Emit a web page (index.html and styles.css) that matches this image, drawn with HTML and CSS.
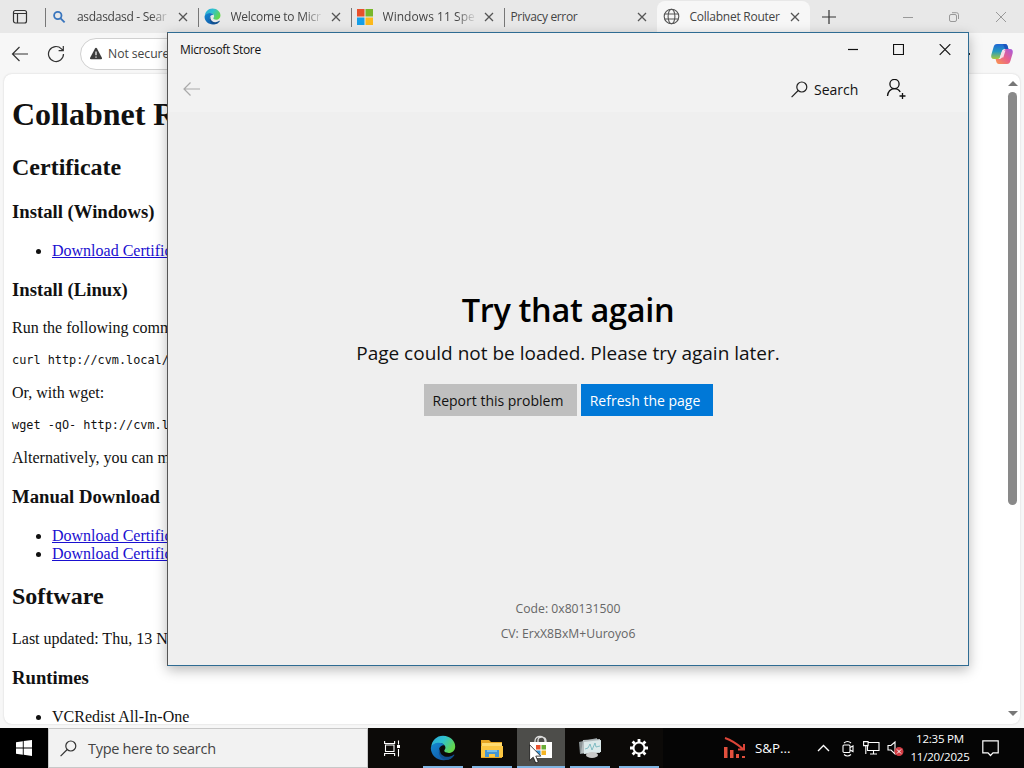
FILE: index.html
```html
<!DOCTYPE html>
<html lang="en">
<head>
<meta charset="utf-8">
<title>Desktop</title>
<link rel="stylesheet" href="styles.css">
</head>
<body>
<div class="desktop">
  <main class="browser">
    <div class="tabs">
      <svg class="workspaces" width="16" height="16" viewBox="0 0 16 16" fill="none" stroke="#333" stroke-width="1.2"><rect x="1.5" y="1.5" width="13" height="12.5" rx="2"/><path d="M2 4.5h12M5.5 5v9" /></svg>
      <div class="tab t1">
        <svg width="16" height="16" viewBox="0 0 16 16" fill="none" stroke="#3975bd" stroke-width="1.8"><circle cx="6.8" cy="6.5" r="3.7"/><path d="M9.6 9.3l4 4"/></svg>
        <span class="tab-title fade">asdasdasd - Sear</span>
        <svg class="x" width="10" height="10" viewBox="0 0 10 10"><path d="M1 1l8 8M9 1l-8 8"/></svg>
      </div>
      <div class="tab t2">
        <svg width="17" height="17" viewBox="0 0 32 32"><use href="#edge"/></svg>
        <span class="tab-title fade">Welcome to Micr</span>
        <svg class="x" width="10" height="10" viewBox="0 0 10 10"><path d="M1 1l8 8M9 1l-8 8"/></svg>
      </div>
      <div class="tab t3">
        <svg width="16" height="16" viewBox="0 0 16 16"><path fill="#e8502a" d="M0 0h7.5v7.5H0z"/><path fill="#78b72a" d="M8.5 0H16v7.5H8.5z"/><path fill="#159fe8" d="M0 8.5h7.5V16H0z"/><path fill="#fcb91b" d="M8.5 8.5H16V16H8.5z"/></svg>
        <span class="tab-title fade">Windows 11 Spe</span>
        <svg class="x" width="10" height="10" viewBox="0 0 10 10"><path d="M1 1l8 8M9 1l-8 8"/></svg>
      </div>
      <div class="tab t4">
        <span class="tab-title">Privacy error</span>
        <svg class="x" width="10" height="10" viewBox="0 0 10 10"><path d="M1 1l8 8M9 1l-8 8"/></svg>
      </div>
      <div class="tab t5">
        <svg width="17" height="17" viewBox="0 0 17 17" fill="none" stroke="#555" stroke-width="1.1"><circle cx="8.5" cy="8.5" r="7.3"/><ellipse cx="8.5" cy="8.5" rx="3.4" ry="7.3"/><path d="M1.8 6h13.4M1.8 11h13.4"/></svg>
        <span class="tab-title">Collabnet Router</span>
        <svg class="x" width="10" height="10" viewBox="0 0 10 10"><path d="M1 1l8 8M9 1l-8 8"/></svg>
      </div>
      <svg class="plus" width="14" height="14" viewBox="0 0 14 14" stroke="#333" stroke-width="1.2"><path d="M7 0v14M0 7h14"/></svg>
      <div class="win-controls">
        <svg width="10" height="10" viewBox="0 0 10 10"><path d="M0 5.5h10"/></svg>
        <svg width="10" height="10" viewBox="0 0 10 10"><rect x=".5" y="2.5" width="7" height="7" rx="1.5"/><path d="M3 .7h4.5a2 2 0 0 1 2 2V7"/></svg>
        <svg width="12" height="12" viewBox="0 0 12 12"><path d="M1 1l10 10M11 1L1 11"/></svg>
      </div>
    </div>
    <div class="toolbar">
      <svg width="18" height="16" viewBox="0 0 18 16" fill="none" stroke="#333" stroke-width="1.2"><path d="M17 8H1.5M8.5 1L1.5 8l7 7"/></svg>
      <svg width="18" height="18" viewBox="0 0 18 18" fill="none" stroke="#333" stroke-width="1.2"><path d="M16.5 9A7.5 7.5 0 1 1 14.4 3.8L16 5.4M16.3 1v4.6h-4.7"/></svg>
      <div class="address">
        <svg width="14" height="13" viewBox="0 0 14 13"><path fill="#3c3c3c" d="M7 .8q.6 0 1 .7l5 9.600q.4 1-.8 1.200H1.800Q.6 12.100 1 11.100L6 1.500Q6.400.8 7 .8z"/><path stroke="#fff" stroke-width="1.200" d="M7 4.500v3.800M7 9.500v1.200"/></svg>
        <span>Not secure</span>
      </div>
      <i class="dot"></i>
      <svg class="copilot" width="24" height="24" viewBox="0 0 24 24">
        <defs>
          <linearGradient id="cpa" x1="0" y1="0" x2="0" y2="1"><stop offset="0" stop-color="#1f66d4"/><stop offset=".5" stop-color="#269ac0"/><stop offset="1" stop-color="#a9c93c"/></linearGradient>
          <linearGradient id="cpb" x1="1" y1="0" x2="0" y2="1"><stop offset="0" stop-color="#a55ae0"/><stop offset=".5" stop-color="#e8608c"/><stop offset="1" stop-color="#fb9a4c"/></linearGradient>
        </defs>
        <path fill="url(#cpa)" d="M7 2h8c2 0 2.500 1.500 3 3.500l.4 1.500H15c-2 0-2.800 1-3.400 3l-1.300 4.500c-.6 2-1.600 2.500-3.300 2.500H4C1.500 17 .7 15 1.400 12.500L3.600 5C4.200 3 5 2 7 2z"/>
        <path fill="url(#cpb)" d="M17 22H9c-2 0-2.500-1.500-3-3.500L5.600 17H9c2 0 2.800-1 3.400-3l1.300-4.500C14.300 7.500 15.300 7 17 7h3c2.500 0 3.300 2 2.600 4.500L20.400 19c-.6 2-1.400 3-3.400 3z"/>
        <path fill="#1d55bd" d="M13 2h2c2 0 2.500 1.500 3 3.500l.4 1.500H15z"/>
        <path fill="#f6dce8" d="M12.500 8.500h3l-2.200 7h-3.500z"/>
      </svg>
    </div>
    <div class="view">
      <div class="page">
        <h1>Collabnet Router</h1>
        <h2>Certificate</h2>
        <h3>Install (Windows)</h3>
        <ul><li><a>Download Certificate</a></li></ul>
        <h3>Install (Linux)</h3>
        <p>Run the following command:</p>
        <pre>curl http://cvm.local/</pre>
        <p>Or, with wget:</p>
        <pre>wget -qO- http://cvm.local/</pre>
        <p>Alternatively, you can manually</p>
        <h3>Manual Download</h3>
        <ul><li><a>Download Certificate</a></li><li><a>Download Certificate</a></li></ul>
        <h2>Software</h2>
        <p>Last updated: Thu, 13 Nov</p>
        <h3>Runtimes</h3>
        <ul><li>VCRedist All-In-One</li></ul>
      </div>
      <div class="scrollbar"><i class="up"></i><i class="thumb"></i><i class="down"></i></div>
    </div>
  </main>

  <section class="store">
    <header class="store-title">
      <span>Microsoft Store</span>
      <div class="store-controls">
        <svg width="10" height="12" viewBox="0 0 10 12"><path d="M0 5.500h10"/></svg>
        <svg width="11" height="12" viewBox="0 0 11 12"><path d="M.5.500h10v10H.5z"/></svg>
        <svg width="12" height="12" viewBox="0 0 12 12"><path d="M.7.2l10.600 10.600M11.300.2L.7 10.800"/></svg>
      </div>
    </header>
    <div class="store-nav">
      <svg class="back" width="17" height="14" viewBox="0 0 17 14" fill="none" stroke="#aaa" stroke-width="1.200"><path d="M17 7H1M7.500.5L1 7l6.500 6.500"/></svg>
      <svg width="17" height="17" viewBox="0 0 17 17" fill="none" stroke="#222" stroke-width="1.200"><circle cx="10.800" cy="6" r="5"/><path d="M7.200 9.500L.6 16.200"/></svg>
      <span class="store-search">Search</span>
      <svg class="person" width="21" height="21" viewBox="0 0 21 21" fill="none" stroke="#111" stroke-width="1.300"><circle cx="8.500" cy="5" r="4.600"/><path d="M1.500 17c.2-4 3-7.400 7-7.400 2.600 0 4.600 1.300 5.700 3.400M16.500 14v6M13.500 17h6"/></svg>
    </div>
    <div class="message">
      <div class="headline">Try that again</div>
      <div class="detail">Page could not be loaded. Please try again later.</div>
      <div class="actions"><span class="btn report">Report this problem</span><span class="btn refresh">Refresh the page</span></div>
    </div>
    <div class="codes"><span class="code">Code: 0x80131500</span><span class="cv">CV: ErxX8BxM+Uuroyo6</span></div>
  </section>

  <footer class="taskbar">
    <div class="start"><svg width="16" height="16" viewBox="0 0 16 16" fill="#fff"><path d="M0 2.300L6.800 1.300v6.200H0zM7.700 1.100L16 0v7.500H7.700zM0 8.400h6.800v6.300L0 13.700zM7.700 8.400H16V16l-8.300-1.200z"/></svg></div>
    <div class="search">
      <svg width="17" height="17" viewBox="0 0 17 17" fill="none" stroke="#333" stroke-width="1.200"><circle cx="10.800" cy="6" r="5"/><path d="M7.200 9.500L.6 16.200"/></svg>
      <span>Type here to search</span>
    </div>
    <div class="taskview"><svg width="17" height="17" viewBox="0 0 17 17" fill="none" stroke="#fff" stroke-width="1.100"><path d="M.6 1v2.500h10V1M1.500 5h8.500v6.500H1.500zM.6 16v-2.500h10V16M14.500.5v4M14.500 9v7.500"/><path fill="#fff" stroke="none" d="M13 5h3v3h-3z"/></svg></div>
    <div class="apps">
      <div class="app"><svg width="26" height="26" viewBox="0 0 32 32">
        <defs>
          <linearGradient id="eg" x1="0" y1="0" x2="1" y2=".5"><stop offset="0" stop-color="#2aa6d8"/><stop offset=".5" stop-color="#2fc2d0"/><stop offset="1" stop-color="#63d64c"/></linearGradient>
          <linearGradient id="eb" x1="0" y1="0" x2="1" y2="1"><stop offset="0" stop-color="#1389d3"/><stop offset="1" stop-color="#124e9d"/></linearGradient>
        </defs>
        <g id="edge"><path fill="url(#eg)" d="M1.500 15C2 7 8 1 16 1c9 0 15 6.500 15 13 0 5-3.500 8-8 8-3.500 0-5.500-1.200-5.500-2.500 0-1 1.500-1.500 1.500-4C19 12.500 16 10 12 10 7 10 3 12 1.500 15z"/><path fill="url(#eb)" d="M1 16c1-4 5-6.500 10-6.500 3.500 0 6 1.500 7 3.500-2-1-7 1-7 6 0 6 5 10 11 10 2.500 0 4-.7 5.500-1.500C24.500 30 20.500 31 17 31 8 31 1 24.500 1 16z"/><path fill="#12508f" d="M14 14c-3 3-2 8 1 10.500 4 3.300 9.500 2.800 14-.3.700-.4 1.200.3.800.9C27 29 24 30.500 20 30.500 12 30 7.500 20 14 14z"/></g>
      </svg></div>
      <div class="app"><svg width="24" height="21" viewBox="0 0 24 21"><path fill="#e7a624" d="M1 2h8l2 2h11v16H1z"/><path fill="#ffdb70" d="M2 5h20v14H2z"/><path fill="#fbc642" d="M1 8h22v11H1z"/><path fill="#4595d2" d="M5 19v-7h14v7h-4v-3H9v3z"/><path fill="#78bee9" d="M7 12h10v2H7z"/></svg></div>
      <div class="app active"><svg width="28" height="28" viewBox="0 0 28 28"><path d="M8 10V7c0-6 10-6 10 0v3M11 10V6c0-4 8-4 8 1v3" fill="none" stroke="#ddd" stroke-width="1.300"/><path fill="#fff" d="M3 8h22v16H3z"/><path fill="#e9522e" d="M9 11h4.500v4.500H9z"/><path fill="#69ad37" d="M14.500 11H19v4.500h-4.500z"/><path fill="#3a91cf" d="M9 16.500h4.500V21H9z"/><path fill="#f5b525" d="M14.500 16.500H19V21h-4.500z"/></svg></div>
      <div class="app"><svg width="25" height="22" viewBox="0 0 25 22"><path fill="#8c9496" d="M1 5l18-4 1 14-18 2z"/><path fill="#b4bcbe" d="M5 3l17-1v14H3z"/><path fill="#dce9ea" d="M6 5l17-2v12l-17 2z"/><path fill="none" stroke="#6bb1ba" stroke-width=".8" d="M7 12l3-1 2-4 2 6 3-7 1 4 4-1"/><ellipse cx="14" cy="18" rx="6" ry="3" fill="#c9c9c9"/></svg></div>
      <div class="app"><svg width="20" height="20" viewBox="0 0 20 20" fill="none" stroke="#fff"><circle cx="10" cy="10" r="5.500" stroke-width="2"/><g stroke-width="2.800"><path d="M10 1v3M10 16v3M1 10h3M16 10h3M3.600 3.600l2.200 2.200M14.200 14.200l2.200 2.200M16.400 3.600l-2.200 2.200M5.800 14.200l-2.200 2.200"/></g></svg></div>
    </div>
    <div class="tray">
      <svg width="24" height="24" viewBox="0 0 24 24" fill="none" stroke="#dc4538"><path stroke-width="2" d="M2 2c6 2 11 5 18 11M15 13.500h6V8"/><path fill="#e2503d" stroke="none" d="M1 11h3.500v11H1zM7 14h3.500v8H7zM13 18h3v4h-3zM19 20h3v2h-3z"/></svg>
      <span class="stock">S&amp;P...</span>
      <svg class="chev" width="13" height="8" viewBox="0 0 13 8" fill="none" stroke="#fff" stroke-width="1.400"><path d="M1 7l5.500-5.500L12 7"/></svg>
      <svg class="meet" width="12" height="17" viewBox="0 0 12 17" fill="none" stroke="#fff" stroke-width="1.100"><rect x="1" y="5" width="7" height="7.500" rx="1"/><path d="M8 7.500l3-1.500v5.500L8 10M2 3q3.500-3 7 0M2 14.500q3.500 3 7 0"/></svg>
      <svg class="net" width="17" height="14" viewBox="0 0 17 14" fill="none" stroke="#fff" stroke-width="1.100"><path d="M5 1.500h11v8H4.500V5M10.500 9.500V13M7 13h7M.6.6h4.500v4H.6zM2.800 5v8"/></svg>
      <svg class="sound" width="17" height="17" viewBox="0 0 17 17"><path fill="none" stroke="#fff" stroke-width="1.100" d="M1 5.500h3L8 2v12l-4-4H1z"/><circle cx="12" cy="11.500" r="4.500" fill="#d23c43"/><path stroke="#fff" d="M10 9.500l4 4M14 9.500l-4 4"/></svg>
      <div class="clock"><span>12:35 PM</span><span class="date">11/20/2025</span></div>
      <svg class="note" width="17" height="17" viewBox="0 0 17 17" fill="none" stroke="#fff" stroke-width="1.200"><path d="M.8.8h15.400v12H11L8.500 15.500 6 12.800H.8z"/></svg>
    </div>
  </footer>
  <svg class="cursor" width="13" height="20" viewBox="0 0 13 20"><path fill="#fff" stroke="#111" stroke-width=".8" d="M.6.8v15.700l3.600-3.400 2.500 5.900 2.600-1.100-2.500-5.800h5z"/></svg>
</div>
</body>
</html>
```

FILE: styles.css
```css
* { box-sizing: border-box; }
body { margin: 0; overflow: hidden; font-family: "Open Sans", "Noto Sans", sans-serif; }
svg { display: block; flex: none; }
.desktop { position: relative; width: 1024px; height: 768px; display: flex; flex-direction: column; overflow: hidden; }
.browser { height: 728px; display: flex; flex-direction: column; background: #f7f7f7; }

.tabs { height: 33px; flex: none; display: flex; align-items: center; background: #e8e8e8; font-size: 12px; color: #444; }
.workspaces { margin: 0 17px 0 12px; }
.tab { height: 32px; display: flex; align-items: center; width: 153px; padding: 0 10px 0 6px; background: linear-gradient(#777, #777) 0 60% / 1px 19px no-repeat; white-space: nowrap; }
.t1 { width: 152.500px; }
.tab-title { flex: 1; margin: 0 7px 0 10px; letter-spacing: -.25px; }
.t1 .tab-title { letter-spacing: -.3px; }
.t3 .tab-title { letter-spacing: .05px; }
.t4 .tab-title { letter-spacing: -.35px; margin-left: 1px; }
.fade { -webkit-mask-image: linear-gradient(90deg, #000 78%, transparent); mask-image: linear-gradient(90deg, #000 78%, transparent); }
.t5 { background: #f7f7f7; border-radius: 8px 8px 0 0; }
.x { fill: none; stroke: #555; stroke-width: 1.3; }
.plus { margin-left: 12px; }
.win-controls { margin-left: auto; margin-right: 17px; display: flex; align-items: center; gap: 36px; fill: none; stroke: #999; }

.toolbar { height: 41px; flex: none; display: flex; align-items: center; padding: 0 10px 0 11px; background: #f7f7f7; }
.toolbar > svg:nth-child(2) { margin: 0 15px 0 18px; }
.address { width: 840px; height: 32px; border: 1px solid #d0d0d0; border-radius: 16px; background: #fff; display: flex; align-items: center; gap: 5px; padding-left: 8px; font-size: 12.200px; letter-spacing: -.05px; color: #444; }
.dot { width: 2px; height: 2px; margin-left: auto; margin-right: 20px; background: #333; }

.view { flex: 1; min-height: 0; margin: 0 4px 4px 4px; display: flex; overflow: hidden; background: #fff; border-radius: 8px; box-shadow: 0 0 2px #ccc; }
.page { flex: 1; padding: 0 8px; color: #111; font: 16px/18px "Liberation Serif", serif; overflow: hidden; }
h1 { font-size: 32px; line-height: 37px; margin: 21.700px 0 21.400px; }
h2 { font-size: 24px; line-height: 27px; margin: 19.900px 0; }
h3 { font-size: 18.700px; line-height: 21.500px; margin: 18.700px 0; }
.page p, ul { margin: 16px 0; }
ul { padding: .8px 0 0 40px; }
.page a { color: #1a0fd0; text-decoration: underline; }
pre { margin: 13px 0; font: 11.850px/15.300px "DejaVu Sans Mono", monospace; }
.scrollbar { width: 15px; padding: 7px 2px 8px; display: flex; flex-direction: column; align-items: center; }
.up, .down { border: 5px solid transparent; border-top: 0; border-bottom: 5px solid #777; }
.down { border-top: 5px solid #777; border-bottom: 0; margin-top: auto; }
.thumb { width: 9px; height: 413px; margin-top: 6px; border-radius: 5px; background: #898989; }

.store { position: absolute; left: 167px; top: 32px; width: 802px; height: 634px; border: 1px solid #2f6c93; border-left-color: #555; background: #efefef; display: flex; flex-direction: column; box-shadow: 0 4px 12px rgba(0,0,0,.28); color: #111; }
.store-title { height: 33px; flex: none; display: flex; justify-content: space-between; align-items: center; padding: 0 17px 0 12px; background: #f2f2f2; font-size: 12px; letter-spacing: -.33px; }
.store-controls { display: flex; align-items: center; gap: 35px; fill: none; stroke: #111; stroke-width: 1.200; }
.store-nav { height: 46px; flex: none; display: flex; align-items: center; padding: 0 61px 0 15px; background: #f2f2f2; font-size: 14px; }
.back { margin-right: auto; }
.store-search { width: 45px; margin: 0 27px 0 6px; white-space: nowrap; }
.message { margin-top: 175px; display: flex; flex-direction: column; align-items: center; white-space: nowrap; }
.headline { font-size: 32.500px; line-height: 46px; font-weight: 600; letter-spacing: -.35px; color: #000; }
.detail { font-size: 19px; line-height: 28px; margin-top: 6px; }
.actions { display: flex; gap: 4px; margin-top: 17px; }
.btn { height: 32px; display: flex; align-items: center; justify-content: center; font-size: 14px; }
.report { width: 153px; background: #bfbfbf; padding-right: 4px; }
.refresh { width: 132px; background: #0078d7; color: #fff; padding-right: 3px; }
.codes { margin-top: auto; padding-bottom: 19px; display: flex; flex-direction: column; align-items: center; font-size: 12.200px; line-height: 25px; color: #666; }

.taskbar { height: 40px; display: flex; background: #0c0a08; color: #fff; }
.start { width: 48px; display: flex; align-items: center; justify-content: center; background: #000; }
.search { width: 320px; display: flex; align-items: center; gap: 11px; padding-left: 11px; background: #f2f2f2; border: 1px solid #c8c8c8; color: #444; font-size: 14.500px; letter-spacing: -.3px; white-space: nowrap; }
.taskview { width: 51px; display: flex; align-items: center; padding-left: 16px; }
.apps { display: flex; gap: 1px; }
.app { width: 48px; display: flex; align-items: center; justify-content: center; background: linear-gradient(#80b5e3, #80b5e3) 50% 100% / 40px 2px no-repeat; }
.app.active { background: linear-gradient(#80b5e3, #80b5e3) 50% 100% / 48px 2px no-repeat #4d4d4a; }
.tray { flex: 1; display: flex; align-items: center; padding-left: 60px; background: #050505; font-size: 12.500px; }
.stock { width: 38px; margin-left: 8px; white-space: nowrap; font-size: 13.300px; }
.chev { margin-left: 24px; }
.meet { margin-left: 12px; }
.net { margin-left: 9px; }
.sound { margin-left: 7px; }
.clock { width: 60px; margin-left: 6px; display: flex; flex-direction: column; align-items: center; font-size: 11.500px; letter-spacing: -.2px; line-height: 18px; white-space: nowrap; }
.note { margin-left: 12px; }
.cursor { position: absolute; left: 529px; top: 744px; }
```
